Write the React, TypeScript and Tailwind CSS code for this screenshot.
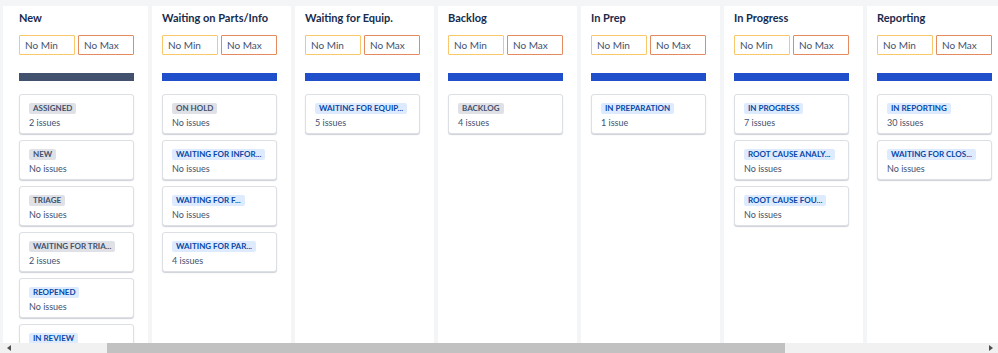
const columns = [
  {
    title: "New",
    bar: "bg-[#42526e]",
    first: true,
    cards: [
      { label: "ASSIGNED", tone: "gray", count: "2 issues" },
      { label: "NEW", tone: "gray", count: "No issues" },
      { label: "TRIAGE", tone: "gray", count: "No issues" },
      { label: "WAITING FOR TRIA...", tone: "gray", count: "2 issues" },
      { label: "REOPENED", tone: "blue", count: "No issues" },
      { label: "IN REVIEW", tone: "blue", count: "No issues" },
    ],
  },
  {
    title: "Waiting on Parts/Info",
    bar: "bg-[#1f4fca]",
    cards: [
      { label: "ON HOLD", tone: "gray", count: "No issues" },
      { label: "WAITING FOR INFOR...", tone: "blue", count: "No issues" },
      { label: "WAITING FOR F...", tone: "blue", count: "No issues" },
      { label: "WAITING FOR PAR...", tone: "blue", count: "4 issues" },
    ],
  },
  {
    title: "Waiting for Equip.",
    bar: "bg-[#1f4fca]",
    cards: [{ label: "WAITING FOR EQUIP...", tone: "blue", count: "5 issues" }],
  },
  {
    title: "Backlog",
    bar: "bg-[#1f4fca]",
    cards: [{ label: "BACKLOG", tone: "gray", count: "4 issues" }],
  },
  {
    title: "In Prep",
    bar: "bg-[#1f4fca]",
    cards: [{ label: "IN PREPARATION", tone: "blue", count: "1 issue" }],
  },
  {
    title: "In Progress",
    bar: "bg-[#1f4fca]",
    cards: [
      { label: "IN PROGRESS", tone: "blue", count: "7 issues" },
      { label: "ROOT CAUSE ANALY...", tone: "blue", count: "No issues" },
      { label: "ROOT CAUSE FOU...", tone: "blue", count: "No issues" },
    ],
  },
  {
    title: "Reporting",
    bar: "bg-[#1f4fca]",
    cards: [
      { label: "IN REPORTING", tone: "blue", count: "30 issues" },
      { label: "WAITING FOR CLOS...", tone: "blue", count: "No issues" },
    ],
  },
];

type Card = { label: string; tone: string; count: string };

function StatusCard({ card }: { card: Card }) {
  const lozenge =
    card.tone === "gray"
      ? "bg-[#dfe1e6] text-[#42526e]"
      : "bg-[#deebff] text-[#0747a6]";
  return (
    <div className="flex h-[40px] shrink-0 flex-col items-start rounded-[3px] border border-[#dcdfe4] bg-white pl-[9px] pt-[8px] shadow-[0_1px_1px_rgba(9,30,66,0.2)]">
      <span
        className={`block rounded-[2px] px-[4px] text-[8px] font-bold leading-[11px] whitespace-nowrap ${lozenge}`}
      >
        {card.label}
      </span>
      <p className="mt-[2px] text-[9px] leading-[14px] text-[#42526e]">{card.count}</p>
    </div>
  );
}

export default function App() {
  return (
    <div
      className="flex h-[353px] w-[998px] flex-col overflow-hidden bg-[#f4f5f7]"
      style={{ fontFamily: 'Lato, "Noto Sans", sans-serif' }}
    >
      {/* board */}
      <div className="flex min-h-0 flex-1 gap-[4px] overflow-hidden pl-[3px] pt-[6px]">
        {columns.map((col) => (
          <div
            key={col.title}
            className={`flex shrink-0 flex-col bg-white pr-[14px] pt-[2px] ${
              col.first ? "w-[145px] pl-[16px]" : "w-[139px] pl-[10px]"
            }`}
          >
            <h2 className="shrink-0 text-[11px] font-bold leading-[20px] text-[#172b4d] whitespace-nowrap">
              {col.title}
            </h2>
            <div className="mt-[7px] flex shrink-0 gap-[3px]">
              <div className="flex h-[20px] w-[56px] items-center rounded-[1px] border border-[#f9c86b] pl-[5px] text-[10px] text-[#42526e]">
                No Min
              </div>
              <div className="flex h-[20px] w-[56px] items-center rounded-[1px] border border-[#e58a5e] pl-[5px] text-[10px] text-[#42526e]">
                No Max
              </div>
            </div>
            <div className={`mt-[18px] h-[8px] w-[115px] shrink-0 ${col.bar}`} />
            <div className="mt-[13px] flex w-[115px] shrink-0 flex-col gap-[6px]">
              {col.cards.map((c) => (
                <StatusCard key={c.label} card={c} />
              ))}
            </div>
          </div>
        ))}
      </div>

      {/* horizontal scrollbar */}
      <div className="flex h-[10px] shrink-0 items-center bg-[#f1f1f1]">
        <div className="flex w-[17px] justify-center">
          <span className="h-0 w-0 border-y-[3px] border-r-[4px] border-y-transparent border-r-[#505050]" />
        </div>
        <div className="relative h-full flex-1">
          <div className="absolute left-[90px] top-0 h-full w-[678px] bg-[#c1c1c1]" />
        </div>
        <div className="flex w-[14px] justify-center">
          <span className="h-0 w-0 border-y-[3px] border-l-[4px] border-y-transparent border-l-[#505050]" />
        </div>
      </div>
    </div>
  );
}
